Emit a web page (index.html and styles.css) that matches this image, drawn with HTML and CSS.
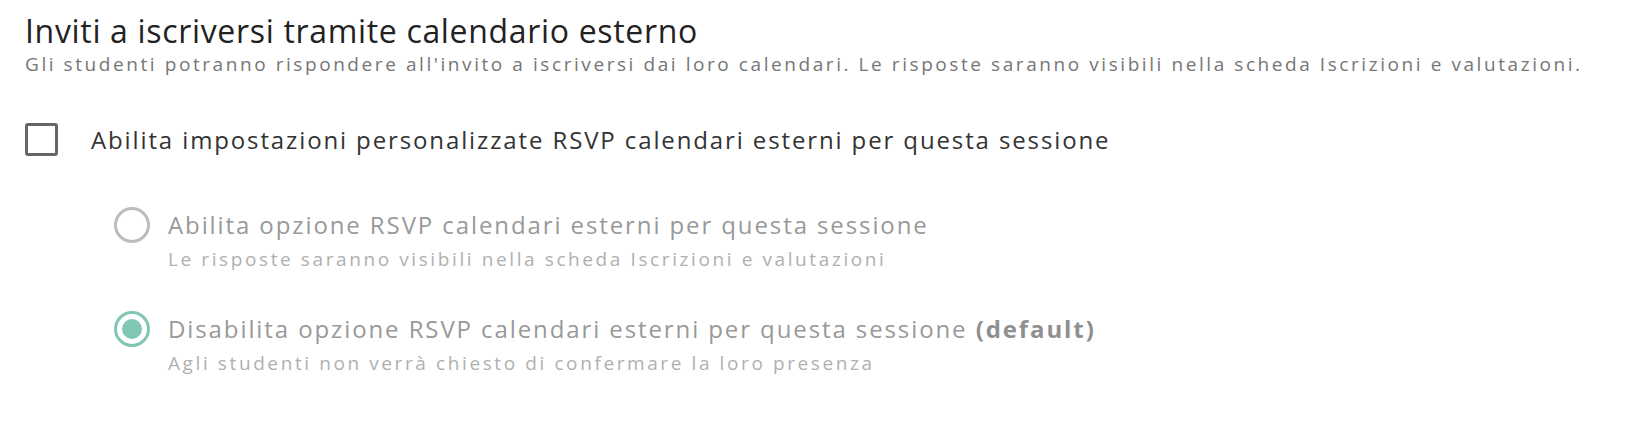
FILE: index.html
```html
<!DOCTYPE html>
<html lang="it">
<head>
<meta charset="utf-8">
<link rel="stylesheet" href="styles.css">
</head>
<body>
<section class="rsvp">
  <h2 class="title">Inviti a iscriversi tramite calendario esterno</h2>
  <p class="caption">Gli studenti potranno rispondere all'invito a iscriversi dai loro calendari. Le risposte saranno visibili nella scheda Iscrizioni e valutazioni.</p>
  <label class="check">
    <span class="box"></span>
    <span class="check-label">Abilita impostazioni personalizzate RSVP calendari esterni per questa sessione</span>
  </label>
  <div class="options">
    <div class="option">
      <span class="radio-wrap"><span class="radio"></span></span>
      <div class="option-text">
        <div class="option-label">Abilita opzione RSVP calendari esterni per questa sessione</div>
        <div class="option-sub">Le risposte saranno visibili nella scheda Iscrizioni e valutazioni</div>
      </div>
    </div>
    <div class="option">
      <span class="radio-wrap"><span class="radio checked"></span></span>
      <div class="option-text">
        <div class="option-label">Disabilita opzione RSVP calendari esterni per questa sessione <b>(default)</b></div>
        <div class="option-sub">Agli studenti non verrà chiesto di confermare la loro presenza</div>
      </div>
    </div>
  </div>
</section>
</body>
</html>
```
FILE: styles.css
```css
html, body {
  margin: 0;
  padding: 0;
  background: #fff;
}
body {
  font-family: "Open Sans", "Noto Sans", sans-serif;
}
.rsvp {
  padding: 11px 0 0 25px;
}
.title {
  margin: 0;
  font-size: 32px;
  font-weight: 400;
  line-height: 39px;
  letter-spacing: 0.67px;
  color: #222;
}
.caption {
  margin: 1px 0 0;
  font-size: 19px;
  line-height: 26px;
  letter-spacing: 2.57px;
  color: #767676;
}
.check {
  display: flex;
  align-items: center;
  gap: 33px;
  margin-top: 46px;
}
.box {
  width: 27px;
  height: 27px;
  border: 3px solid #666;
  border-radius: 3px;
  flex: none;
}
.check-label {
  font-size: 24px;
  letter-spacing: 1.88px;
  color: #333;
}
.options {
  display: flex;
  flex-direction: column;
  gap: 36px;
  padding: 52px 0 0 89px;
}
.option {
  display: flex;
  align-items: flex-start;
  gap: 18px;
}
.radio-wrap {
  height: 34px;
  display: flex;
  align-items: center;
  flex: none;
}
.radio {
  width: 36px;
  height: 36px;
  border: 3px solid #bdbdbd;
  border-radius: 50%;
  box-sizing: border-box;
  position: relative;
}
.radio.checked {
  border-color: #7fc7b4;
}
.radio.checked::after {
  content: "";
  position: absolute;
  inset: 5px;
  border-radius: 50%;
  background: #7fc7b4;
}
.option-label {
  font-size: 24px;
  line-height: 34px;
  letter-spacing: 1.9px;
  color: #999;
}
.option-label b {
  font-weight: 700;
  color: #8f8f8f;
}
.option-sub {
  font-size: 19px;
  line-height: 34px;
  letter-spacing: 2.6px;
  color: #b0b0b0;
}
```
